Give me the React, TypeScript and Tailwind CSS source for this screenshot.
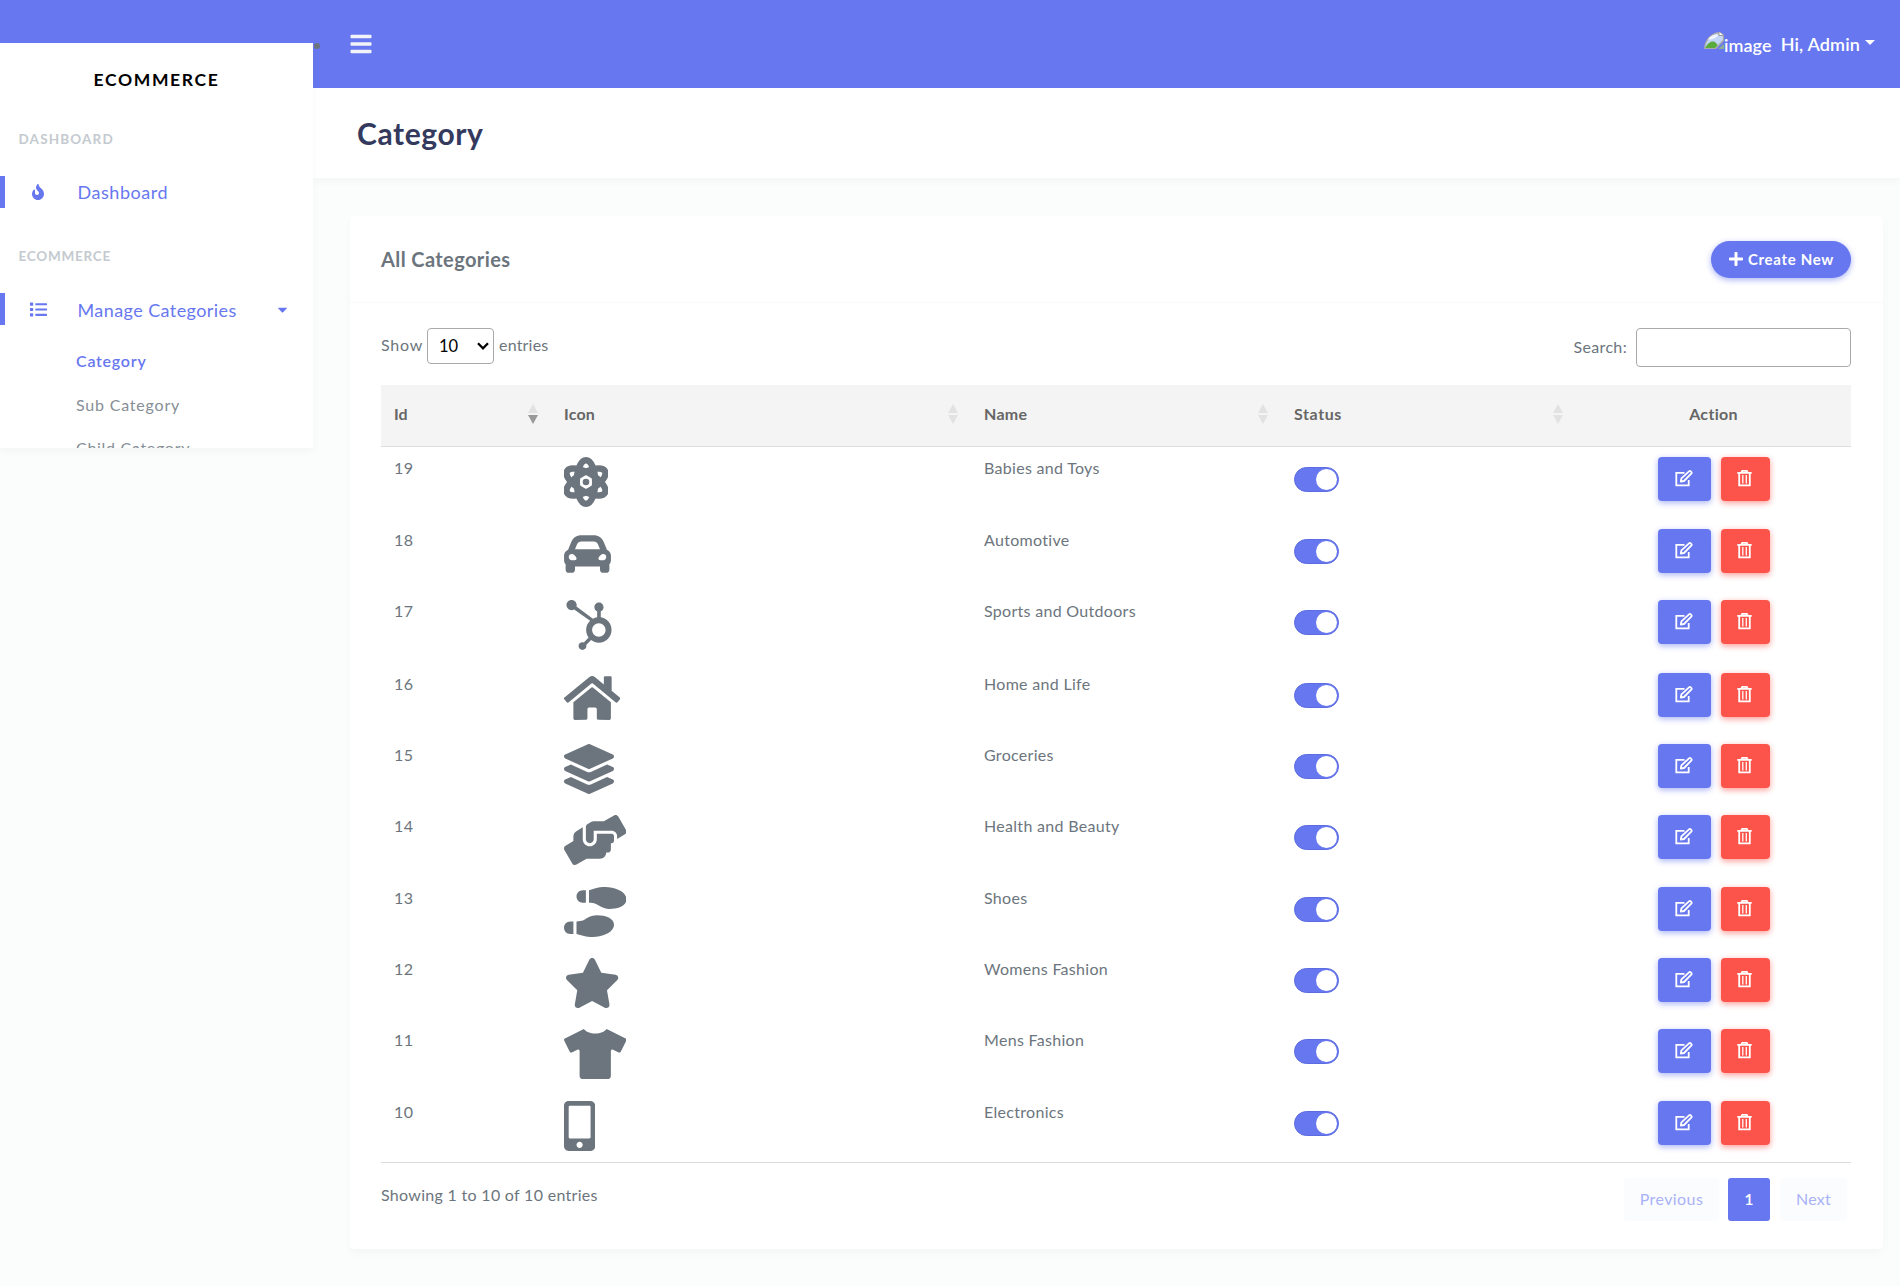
import React from 'react';
import {
  FaBars, FaCarAlt, FaCaretDown, FaFire, FaHandsHelping, FaHome, FaHubspot, FaLayerGroup,
  FaList, FaMobileAlt, FaPlus, FaShoePrints, FaStar, FaTshirt,
} from 'react-icons/fa';

type IconProps = { className?: string };
type Row = { id: number; name: string; icon: React.ComponentType<IconProps>; width: string; height: string };

function AtomIcon({ className }: IconProps) {
  return (
    <svg viewBox="0 0 44 50" className={className} fill="none" stroke="currentColor" strokeWidth="6.400">
      <ellipse cx="22" cy="25" rx="9.200" ry="21.800" />
      <ellipse cx="22" cy="25" rx="9.200" ry="21.800" transform="rotate(60 22 25)" />
      <ellipse cx="22" cy="25" rx="9.200" ry="21.800" transform="rotate(-60 22 25)" />
      <circle cx="22" cy="25" r="3.300" fill="currentColor" stroke="none" />
    </svg>
  );
}

const rows: Row[] = [
  { id: 19, name: 'Babies and Toys', icon: AtomIcon, width: 'w-[44px]', height: 'h-[72px]' },
  { id: 18, name: 'Automotive', icon: FaCarAlt, width: 'w-[47px]', height: 'h-[71px]' },
  { id: 17, name: 'Sports and Outdoors', icon: FaHubspot, width: 'w-[50px]', height: 'h-[73px]' },
  { id: 16, name: 'Home and Life', icon: FaHome, width: 'w-[56.250px]', height: 'h-[71px]' },
  { id: 15, name: 'Groceries', icon: FaLayerGroup, width: 'w-[50px]', height: 'h-[71px]' },
  { id: 14, name: 'Health and Beauty', icon: FaHandsHelping, width: 'w-[62.500px]', height: 'h-[72px]' },
  { id: 13, name: 'Shoes', icon: FaShoePrints, width: 'w-[62.500px]', height: 'h-[71px]' },
  { id: 12, name: 'Womens Fashion', icon: FaStar, width: 'w-[56.250px]', height: 'h-[71px]' },
  { id: 11, name: 'Mens Fashion', icon: FaTshirt, width: 'w-[62.500px]', height: 'h-[72px]' },
  { id: 10, name: 'Electronics', icon: FaMobileAlt, width: 'w-[31.250px]', height: 'h-[71px]' },
];

const columns = 'grid grid-cols-[170px_420px_310px_295px_275px]';

function SortArrows({ desc = false }: { desc?: boolean }) {
  return (
    <svg width="10" height="20" viewBox="0 0 10 20" className="mr-[7px]">
      <path d="M5 0L10 9H0z" fill="#e2e2e2" />
      <path d="M0 11H10L5 20z" fill={desc ? '#999' : '#e2e2e2'} />
    </svg>
  );
}

function EditIcon() {
  return (
    <svg width="19" height="17" viewBox="0 0 19 17" fill="none" stroke="#fff" className="-mt-px">
      <path d="M9.5 2.9H1.3v12.4h12.4V10" strokeWidth="1.8" />
      <path d="M5.800 11.500l.6-3.200 7.9-7.1c.9-.7 3 1.200 2.200 2.200L9 11z" strokeWidth="1.8" strokeLinejoin="round" />
    </svg>
  );
}

function TrashIcon() {
  return (
    <svg width="15" height="17" viewBox="0 0 15 17" fill="none" stroke="#fff" className="-mt-px -ml-[2px]">
      <path d="M0.3 2.8h14.4M4.3 2.6L5.2.9h4.6l.9 1.7" strokeWidth="1.8" />
      <path d="M2.2 3v12.4h10.6V3" strokeWidth="1.8" />
      <path d="M5.8 5v8.500M9.300 5v8.500" strokeWidth="1.3" />
    </svg>
  );
}

function BrokenImage() {
  return (
    <svg width="20" height="17" viewBox="0 0 20 17" className="-mt-[7px]">
      <path d="M0 17C0 7 8 0 16 0l4 3v6l-8 8z" fill="#a9a9a9" />
      <path d="M1.2 16C1.8 8 8 1.6 15 1.4L18.8 4v4L11 16z" fill="#c4d6f8" />
      <path d="M4 7.5C6 3.500 11 2 14 2.500 13 6 9 7.500 4 7.500z" fill="#f2f6fe" />
      <path d="M1.200 16C3 12 6 9.500 9 9.500c2 0 4 2 4.500 4L11 16z" fill="#5aaa3c" />
      <path d="M15 0v3.500h4.500" fill="#fff" stroke="#999" />
      <path d="M20 12v5h-6z" fill="#8fae94" />
    </svg>
  );
}

function SectionLabel({ children, className }: { children: string; className: string }) {
  return <div className={`pl-[18.500px] text-[13.500px] leading-[20px] font-bold text-[#c4cacf] ${className}`}>{children}</div>;
}

function Sidebar() {
  return (
    <aside className="relative z-10 mt-[43px] h-[405px] w-[313px] shrink-0 overflow-hidden bg-white shadow-[0_4px_8px_rgba(0,0,0,0.03)]">
      <div className="mt-[22px] text-center text-[17.500px] leading-[30px] font-bold tracking-[1.650px] text-black">ECOMMERCE</div>
      <SectionLabel className="mt-[34px] tracking-[1.150px]">DASHBOARD</SectionLabel>
      <div className="mt-[27px] flex h-[32px] items-center border-l-[5px] border-[#6777ef] text-[#6777ef]">
        <FaFire className="ml-[25px] h-4 w-4" />
        <span className="ml-[31.500px] text-[18px] leading-[30px] tracking-[0.550px]">Dashboard</span>
      </div>
      <SectionLabel className="mt-[38px] tracking-[0.750px]">ECOMMERCE</SectionLabel>
      <div className="mt-[27px] flex h-[32px] items-center border-l-[5px] border-[#6777ef] text-[#6777ef]">
        <FaList className="ml-[25px] h-[17px] w-[17px]" />
        <span className="mt-[2px] ml-[30.500px] text-[18px] leading-[30px] tracking-[0.420px]">Manage Categories</span>
        <FaCaretDown className="mr-[23px] ml-auto h-[15px] w-[15px]" />
      </div>
      <div className="mt-[14px] pl-[76px] text-[16px] leading-[43.500px] text-[#868e96]">
        <div className="font-semibold tracking-[0.750px] text-[#6777ef]">Category</div>
        <div className="tracking-[0.800px]">Sub Category</div>
        <div className="tracking-[0.700px]">Child Category</div>
      </div>
    </aside>
  );
}

function CategoryRow({ row }: { row: Row }) {
  const Icon = row.icon;
  return (
    <div className={`${columns} ${row.height} text-[16px] leading-6 text-[#6c757d]`}>
      <div className="pt-[9px] pl-[13px] tracking-[0.5px]">{row.id}</div>
      <div className="pt-[10px] pl-[12.500px]">
        <Icon className={`h-[50px] ${row.width}`} />
      </div>
      <div className="pt-[9px] pl-[13px] tracking-[0.300px]">{row.name}</div>
      <div className="pt-[20px] pl-[13px]">
        <div className="flex h-[25px] w-[45px] items-center justify-end rounded-full border border-[#5d6ce0] bg-[#6777ef] pr-px">
          <div className="h-[21px] w-[21px] rounded-full bg-white" />
        </div>
      </div>
      <div className="flex justify-center gap-[10px] pt-[10px]">
        <button className="flex h-11 w-[53px] items-center justify-center rounded bg-[#6777ef] shadow-[0_2px_6px_#acb5f6]"><EditIcon /></button>
        <button className="flex h-11 w-[49px] items-center justify-center rounded bg-[#fc544b] shadow-[0_2px_6px_#fd9b96]"><TrashIcon /></button>
      </div>
    </div>
  );
}

export default function App() {
  return (
    <div className="flex h-[1286px] w-[1900px] overflow-hidden bg-[linear-gradient(#6777ef_88px,#fafdfb_88px)] font-['Lato','Liberation_Sans',sans-serif]">
      <Sidebar />
      <div className="min-w-0 flex-1">
        <header className="flex h-[88px] items-center bg-[#6777ef] text-white">
          <span className="mt-[4px] ml-[1px] h-[6px] w-[6px] rounded-full bg-[#6c757d]" />
          <FaBars className="-mt-px ml-[29px] h-6 w-[24px] text-[#f2f3f8]" />
          <div className="mr-[25px] ml-auto flex items-center text-[18px] leading-6 font-semibold">
            <BrokenImage />
            <span className="mt-[2px] tracking-[0.1px]">image</span>
            <span className="ml-[9px] tracking-[0.150px]">Hi, Admin</span>
            <svg width="10" height="5" viewBox="0 0 10 5" className="-mt-[3px] ml-[5px]"><path d="M0 0h10L5 5z" fill="#fff" /></svg>
          </div>
        </header>
        <div className="flex h-[90px] items-center bg-white pl-[44px] shadow-[0_4px_8px_rgba(0,0,0,0.03)]">
          <h1 className="text-[30px] leading-9 font-bold tracking-[0.600px] text-[#34395e]">Category</h1>
        </div>
        <section className="mt-[38px] mr-[17px] ml-[37px] h-[1033px] rounded-[4px] bg-white shadow-[0_4px_8px_rgba(0,0,0,0.03)]">
          <div className="flex h-[87px] items-center justify-between border-b border-[#f9f9f9] pr-8 pl-[31px]">
            <h4 className="text-[20px] leading-7 font-bold tracking-[0.400px] text-[#6c757d]">All Categories</h4>
            <button className="flex h-[37px] w-[140px] items-center justify-center rounded-full bg-[#6777ef] text-[15px] font-bold text-white shadow-[0_2px_6px_#acb5f6]">
              <FaPlus className="mr-[4px] h-4 w-4" />
              <span className="tracking-[0.700px]">Create New</span>
            </button>
          </div>
          <div className="pr-8 pl-[31px] text-[16px] text-[#6c757d]">
            <div className="flex h-[82px] items-start justify-between pt-[25px]">
              <div className="flex h-9 items-center">
                <span className="-mt-[2px] w-[42px] tracking-[0.800px]">Show</span>
                <span className="mr-[5px] ml-[4px] flex h-9 w-[67px] items-center justify-between rounded-[4px] border border-[#aaa] pr-[4px] pl-[11px] text-[16.500px] text-black">
                  10
                  <svg width="12" height="8" viewBox="0 0 12 8" fill="none" stroke="#000" strokeWidth="2.300"><path d="M1 1.300l5 5 5-5" /></svg>
                </span>
                <span className="-mt-[2px] tracking-[0.200px]">entries</span>
              </div>
              <label className="flex items-center tracking-[0.350px]">
                <span className="-mt-px">Search:</span>
                <input className="ml-[9px] h-[39px] w-[215px] rounded-[4px] border border-[#aaa] bg-white" />
              </label>
            </div>
            <div className={`${columns} h-[62px] items-center border-b border-[#dcdcdc] bg-[#f4f4f4] pb-[3px] text-[16px] leading-6 font-bold text-[#666]`}>
              <div className="flex items-center justify-between pr-[6px] pl-[13px]"><span>Id</span><SortArrows desc /></div>
              <div className="flex items-center justify-between pr-[6px] pl-[13px]"><span className="tracking-[0.2px]">Icon</span><SortArrows /></div>
              <div className="flex items-center justify-between pr-[6px] pl-[13px]"><span className="tracking-[0.3px]">Name</span><SortArrows /></div>
              <div className="flex items-center justify-between pr-[6px] pl-[13px]"><span className="tracking-[0.6px]">Status</span><SortArrows /></div>
              <div className="text-center tracking-[0.3px]">Action</div>
            </div>
            {rows.map((row) => <CategoryRow key={row.id} row={row} />)}
            <div className="flex justify-between border-t border-[#dcdcdc]">
              <div className="pt-[20px] leading-6 tracking-[0.3px]">Showing 1 to 10 of 10 entries</div>
              <div className="mt-[15px] mr-[4px] flex h-[43px] leading-[41px]">
                <span className="w-[95px] rounded-[4px] bg-[#fbfcfe] text-center tracking-[0.400px] text-[#a9b2f6]">Previous</span>
                <span className="ml-[9px] w-[42px] rounded-[3px] bg-[#6777ef] text-center font-semibold text-white">1</span>
                <span className="ml-[10px] w-[67px] rounded-[4px] bg-[#fbfcfe] text-center tracking-[0.300px] text-[#a9b2f6]">Next</span>
              </div>
            </div>
          </div>
        </section>
      </div>
    </div>
  );
}
